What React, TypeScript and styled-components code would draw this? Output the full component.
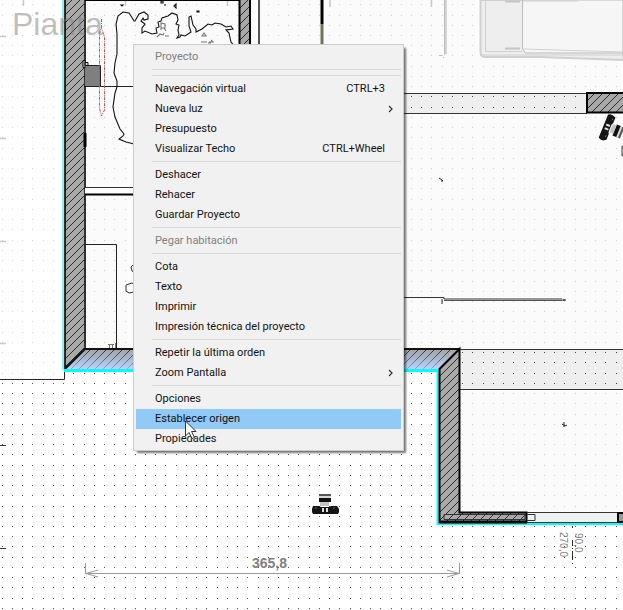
import React from "react";
import styled, { createGlobalStyle } from "styled-components";

const GlobalStyle = createGlobalStyle`
  *, *::before, *::after { box-sizing: border-box; }
  body { margin: 0; background: #fff; overflow: hidden; }
`;

const Workspace = styled.main`
  position: relative;
  min-height: 100vh;
  overflow: hidden;
  background: #fff;
  font-family: "Liberation Sans", Arial, sans-serif;
`;

const Drawing = styled.svg`
  display: block;
  width: 100%;
  height: 100vh;
`;

const Menu = styled.div`
  position: absolute;
  left: 133px;
  top: 44px;
  display: flex;
  flex-direction: column;
  width: 271px;
  padding: 2px 2px 1px;
  border: 1px solid #ccc;
  background: #f1f1f1;
  box-shadow: 3px 3px 2px -1px rgba(0, 0, 0, 0.55);
  font-family: Roboto, "Open Sans", sans-serif;
`;

const Separator = styled.hr`
  height: 1px;
  width: auto;
  margin: 2px 0 3px 16px;
  border: 0;
  background: #d8d8d8;
`;

const MenuItem = styled.button<{ $active?: boolean }>`
  display: flex;
  align-items: center;
  justify-content: space-between;
  width: 100%;
  height: 20px;
  padding: 0 16px 0 19px;
  border: 0;
  background: ${(p) => (p.$active ? "#91c9f7" : "transparent")};
  color: #111;
  font: inherit;
  font-size: 11px;
  line-height: 20px;
  text-align: left;
  white-space: nowrap;
  &:disabled { color: #808080; }
`;

const Arrow = styled.svg`
  width: 5px;
  height: 8px;
  margin-right: -8px;
`;

const Pointer = styled.svg`
  position: absolute;
  left: 184px;
  top: 420px;
  width: 13px;
  height: 20px;
  pointer-events: none;
`;

type Entry = { label: string; keys?: string; sub?: boolean; off?: boolean; active?: boolean };

const groups: Entry[][] = [
  [{ label: "Proyecto", off: true }],
  [],
  [
    { label: "Navegación virtual", keys: "CTRL+3" },
    { label: "Nueva luz", sub: true },
    { label: "Presupuesto" },
    { label: "Visualizar Techo", keys: "CTRL+Wheel" },
  ],
  [{ label: "Deshacer" }, { label: "Rehacer" }, { label: "Guardar Proyecto" }],
  [{ label: "Pegar habitación", off: true }],
  [
    { label: "Cota" },
    { label: "Texto" },
    { label: "Imprimir" },
    { label: "Impresión técnica del proyecto" },
  ],
  [{ label: "Repetir la última orden" }, { label: "Zoom Pantalla", sub: true }],
  [{ label: "Opciones" }, { label: "Establecer origen", active: true }, { label: "Propiedades" }],
];

const STEP = 10.23;

function dots(x0: number, y0: number, x1: number, y1: number) {
  let d = "";
  for (let j = 0; j < 61; j++) {
    const y = Math.round(4.3 + j * STEP);
    if (y < y0 || y > y1) continue;
    for (let i = 0; i < 62; i++) {
      const x = Math.round(1.8 + i * STEP);
      if (x >= x0 && x <= x1) d += `M${x} ${y}h1v1h-1z`;
    }
  }
  return d;
}

const Camera = () => (
  <g>
    <path d="M7 0h12v8H7z" fill="#d8d8d8" />
    <path d="M7 0h12v2H7z" fill="#555" />
    <path d="M7 4h12v4H7z" fill="#111" />
    <path d="M8 8h9v4H8z" fill="#c4c4c4" />
    <path d="M1 12h6l2 1h8l2-1h6l2 3v3l-1 2H1l-1-2v-3z" fill="#151515" />
    <path d="M10 14h2v4h-2zM14 14h2v4h-2z" fill="#ddd" />
    <path d="M21 14h2M3 14h2" stroke="#667" />
  </g>
);

const Plan = () => (
  <Drawing viewBox="0 0 623 610" preserveAspectRatio="xMinYMin slice" role="img" aria-label="Plano de planta">
    <defs>
      <pattern id="hatch" width="8" height="8" patternUnits="userSpaceOnUse">
        <path d="M-2 2L2 -2M0 8L8 0M6 10L10 6" stroke="#2a2a2a" strokeWidth="1" />
      </pattern>
      <linearGradient id="selected" x1="0" y1="0" x2="0" y2="1">
        <stop offset="0" stopColor="#a2a2a2" />
        <stop offset="0.5" stopColor="#a9b9d2" />
        <stop offset="1" stopColor="#bcd4fa" />
      </linearGradient>
      <linearGradient id="fade" x1="0" y1="0" x2="0" y2="1">
        <stop offset="0" stopColor="#fff" />
        <stop offset="1" stopColor="#fff" stopOpacity="0.1" />
      </linearGradient>
      <mask id="hatchFade">
        <path d="M60 348h402v24H60z" fill="url(#fade)" />
      </mask>
    </defs>

    <path d={dots(0, 0, 623, 610)} fill="#555" />
    <path d="M0 0H64V379H0z" fill="#fff" />
    <path d={dots(0, 0, 62, 377)} fill="#d2d2d2" />
    <path d="M85 0H623V349H85zM460 390H623V512H460z" fill="#fbfbfb" />
    <path d={dots(86, 0, 623, 347) + dots(461, 391, 623, 511)} fill="#ccc" />
    <path d="M0 379.5H64.500V370" fill="none" stroke="#222" />
    <path d="M0 36.500h6M0 138.500h6M0 241.500h6M0 343.500h6M23.500 0v6M125.500 0v6M227.500 0v6M330 0v7M431.500 0v7" stroke="#c8c8c8" strokeWidth="1.5" />
    <path d="M0 445.500h6M0 548.500h6" stroke="#333" />
    <path d="M63 0V370" stroke="#8ff0f0" strokeWidth="2" />

    {/* left wall */}
    <path d="M65 0H84V349L65 369z" fill="#a9a9a9" />
    <path d="M65 0H84V349L65 369z" fill="url(#hatch)" />
    <path d="M65 0V369L85 349V0" fill="none" stroke="#000" strokeWidth="1.600" />
    <path d="M85 133v14" stroke="#000" strokeWidth="3" />

    {/* fixtures beside the left wall */}
    <path d="M85 .500H250" stroke="#000" />
    <path d="M85 65h15v21H85z" fill="#7f7f7f" />
    <path d="M85 65.500h15.500V86M85 86.500h49" fill="none" stroke="#222" />
    <path d="M83 60.500h2v7h-2zM85 62.500h3v3h-3z" fill="#ddd" stroke="#111" />
    <path d="M101.500 19v8l-2 6v75l2 8 3-6V37l-3-9" fill="none" stroke="#b85450" strokeDasharray="3 1 1 1" />
    <path d="M85 188h49v6H85z" fill="#fff" />
    <path d="M85 187.500h49" stroke="#333" />
    <path d="M85 194.500h49" stroke="#000" strokeWidth="2" />
    <path d="M85 244.500h31.500V349" fill="none" stroke="#222" />
    <path d="M108 344.500h6M109.500 345v4M112.500 345v4M115.500 343v6" stroke="#777" />
    <path d="M134 264l-3 3 1 4 2 1M134 284l-2-1-6 2v6l3 2 5-1" fill="none" stroke="#333" />

    {/* furniture outline */}
    <g fill="none" stroke="#111" strokeWidth="1.100">
      <path d="M134 144l-8-2-7-3 4-3 1-2-4-5-5-12-2-10 2-14 2-6v-6l-3-8 1-10 2-9v-20l-1-10 2-8 5-4 6 1 2 3 3 5h1l4-7 5-2 4 3v4l-4 1-1-2-2 3 4 3-3 4v5l3-2 7 3 5-1-1-5 3-1-1-5 3-1 1-3 6-2 4-3 5 2 1 5-2 4 3 1-1 5 1 5-2 3 3-1 1-2 4 1 6-4-2-6v-9l2-1 2 9 3 4v3l6-3 6-5 4 1 3-2 6 1 5 3 5-1 2 3-7 1 3 3 2 9 5 6 2 6-2 2" />
      <path d="M121 5h2l-1 1zM161 1h2v2h-2zM164 5h2M174 6l2-2v4zM197 11h2v1h-2z" />
      <path d="M157 37l3-3 3 1 1-2M165 36h4M161 30v-7l4 1v4h-4m3 0l2 3M202 36l2-3 2 3zM201 42h6m2 0h4l-2-2m-3 3h3" stroke="#777" />
    </g>

    {/* upper wall stubs */}
    <path d="M240 0h10v45h-10z" fill="#a8a8a8" />
    <path d="M240 0h10v45h-10z" fill="url(#hatch)" />
    <path d="M239.500 0v45M250 0v45" stroke="#000" strokeWidth="2" />
    <path d="M252 0h6v45h-6z" fill="#fff" />
    <path d="M259 0v45" stroke="#555" strokeWidth="2" />
    <path d="M322 0v24" stroke="#000" strokeWidth="3" />
    <path d="M322 24v21" stroke="#727254" strokeWidth="3" />
    <path d="M445.500 0v54" stroke="#d5d5d5" strokeWidth="3" />
    <path d="M444.500 0v55M439 55.500h3M443 57.500h1" stroke="#bbb" />

    {/* bed */}
    <path d="M480.500 0V52q0 5 5 5h55l83 3V0z" fill="#eee" stroke="#d0d0d0" strokeWidth="2" />
    <path d="M522.500 0V49l3 4H623V0z" fill="#f6f6f6" stroke="#bbb" />
    <path d="M485.500 0v51.500h37M523 49l100 3M480 55h143M523 1h55" fill="none" stroke="#d0d0d0" />
    <path d="M505 1.500h15M505 48.500h15" stroke="#c4c4c4" strokeWidth="2" />

    {/* corridor */}
    <path d="M400 93h186v20H400zM460 349h163v40H460z" fill="#efefef" />
    <path d={dots(400, 94, 580, 112) + dots(461, 350, 623, 388)} fill="#444" />
    <path d="M400 93.500h187M400 113.500h187M460 349.500h163M460 389.500h163" stroke="#333" />
    <path d="M587 92h40v21h-40z" fill="#a8a8a8" />
    <path d="M587 92h40v21h-40z" fill="url(#hatch)" />
    <path d="M623 93h-36v19.500h36" fill="none" stroke="#000" strokeWidth="2" />
    <path d="M404 297.500h40v1.500h118" fill="none" stroke="#333" />
    <path d="M444 300.500h118" stroke="#555" />
    <path d="M442 299v5M562 300h4M564 299v2" stroke="#222" />
    <path d="M439 178l3 2 1 1M441 181h2M562 424l3 2 2-1M564 422v5" fill="none" stroke="#222" />

    {/* lower wall, selected */}
    <path d="M85 349H460L439 369H65z" fill="url(#selected)" />
    <path d="M85 349H460L439 369H65z" fill="url(#hatch)" mask="url(#hatchFade)" />
    <path d="M85 349H460M65 369L85 349" stroke="#111" strokeWidth="2" />
    <path d="M64 370.500H437.500V524H623" fill="none" stroke="#0ff" strokeWidth="2" />
    <path d="M64 370.500H438" stroke="#0ff" strokeWidth="3" />

    {/* right wall */}
    <path d="M440 369L460 349V512H527V522H440z" fill="#a9a9a9" />
    <path d="M440 369L460 349V512H527V522H440z" fill="url(#hatch)" />
    <path d="M439.500 369L459.500 349V512.500H526.500V522H439.500z" fill="none" stroke="#000" strokeWidth="2" />
    <path d="M444 514.500h81v5h-81z" fill="none" stroke="#333" />
    <path d="M439 522h88" stroke="#000" strokeWidth="3" />
    <path d="M528 513h89v9h-89z" fill="#f0f0f0" />
    <path d="M527 512.500h90M527 522.500h90M527 514.500h8v6h-8" fill="none" stroke="#333" />
    <path d="M618 513h8v9h-8z" fill="#999" stroke="#000" strokeWidth="2" />

    {/* dimensions */}
    <g fill="none" stroke="#999">
      <path d="M85.500 563v11M459.500 563v11M85 573.500h375" />
      <path d="M98 570l-12 3.500 12 3.500M447 570l12 3.500-12 3.500" />
    </g>
    <path d="M572.500 526v38" stroke="#333" strokeDasharray="2 12 6 2 1 2 9 3" />
    <g fontFamily="'Liberation Sans', Arial, sans-serif" fill="#808080">
      <text x="12" y="35" fontSize="32" fillOpacity="0.5">Pianta</text>
      <text x="252" y="568" fontSize="14" fontWeight="bold">365,8</text>
      <text fontSize="10" transform="translate(575 533) rotate(90)">90,0</text>
      <text fontSize="10" transform="translate(560 532) rotate(90)">270,0</text>
    </g>
    <g transform="translate(312 494)"><Camera /></g>
    <g transform="translate(627 121) rotate(112)"><Camera /></g>
    <path d="M625 146h-3v10h3" fill="#ccc" stroke="#444" />
  </Drawing>
);

export default function App() {
  return (
    <>
      <GlobalStyle />
      <Workspace>
        <Plan />
        <Menu role="menu" aria-label="Proyecto">
          {groups.map((group, g) => (
            <React.Fragment key={g}>
              {g > 0 && <Separator />}
              {group.map((item) => (
                <MenuItem key={item.label} type="button" role="menuitem" disabled={item.off} $active={item.active}>
                  <span>{item.label}</span>
                  {item.keys && <span>{item.keys}</span>}
                  {item.sub && (
                    <Arrow viewBox="0 0 5 8" aria-hidden="true">
                      <path d="M1 1l3 3-3 3" fill="none" stroke="#333" strokeWidth="1.200" />
                    </Arrow>
                  )}
                </MenuItem>
              ))}
            </React.Fragment>
          ))}
        </Menu>
        <Pointer viewBox="0 0 13 20" aria-hidden="true">
          <path d="M1.500 1v15l3.500-3.500 3 6 2.500-1-3-6H12z" fill="#fff" stroke="#333" />
        </Pointer>
      </Workspace>
    </>
  );
}
